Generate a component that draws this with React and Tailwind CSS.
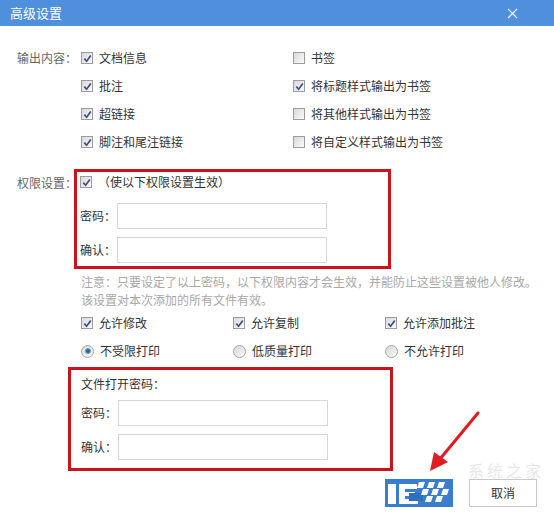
import React from "react";

const Check = ({ checked }) => (
  <span className="w-[12px] h-[12px] border border-[#9c9c9c] bg-linear-to-br from-[#d8d8d8] to-[#fbfbfb] flex items-center justify-center shrink-0">
    {checked && (
      <svg width="9" height="9" viewBox="0 0 9 9">
        <path d="M1.3 4.6 L3.6 7.2 L7.8 1.4" stroke="#3e4f8a" strokeWidth="1.7" fill="none" />
      </svg>
    )}
  </span>
);

const Radio = ({ checked }) => (
  <span className="w-[13px] h-[13px] rounded-full border border-[#a8a8a8] bg-linear-to-br from-[#d6d6d6] to-[#fafafa] flex items-center justify-center shrink-0">
    {checked && <span className="w-[6px] h-[6px] rounded-full bg-[#1f6a99] border border-[#6fa3c4]" />}
  </span>
);

const CItem = ({ checked, children }) => (
  <div className="flex items-center gap-[6px] text-[#333] whitespace-nowrap">
    <Check checked={checked} />
    <span>{children}</span>
  </div>
);

const RItem = ({ checked, children }) => (
  <div className="flex items-center gap-[6px] text-[#333] whitespace-nowrap">
    <Radio checked={checked} />
    <span>{children}</span>
  </div>
);

const Field = ({ label }) => (
  <div className="flex items-center">
    <span className="w-[37px] text-[#333] whitespace-nowrap">{label}</span>
    <div className="w-[210px] h-[26px] border border-[#d6d6d6] bg-white" />
  </div>
);

export default function App() {
  return (
    <div
      className="relative w-[554px] h-[516px] bg-white overflow-hidden text-[12px] leading-[18px]"
      style={{ fontFamily: '"Noto Sans CJK SC", "Noto Sans", sans-serif' }}
    >
      {/* title bar */}
      <div className="h-[26px] bg-[#4f8fdc] flex items-center justify-between pl-[10px] pr-[36px] text-white text-[13px]">
        <span>高级设置</span>
        <svg width="11" height="11" viewBox="0 0 11 11">
          <path d="M1 1 L10 10 M10 1 L1 10" stroke="#ffffff" strokeWidth="1.2" />
        </svg>
      </div>

      {/* output content */}
      <div className="mt-[18px] flex pl-[17px]">
        <div className="w-[64px] h-[28px] flex items-center text-[#666] whitespace-nowrap">输出内容：</div>
        <div className="grid grid-cols-[212px_1fr]">
          <div className="h-[28px] flex items-center"><CItem checked>文档信息</CItem></div>
          <div className="h-[28px] flex items-center"><CItem>书签</CItem></div>
          <div className="h-[28px] flex items-center"><CItem checked>批注</CItem></div>
          <div className="h-[28px] flex items-center"><CItem checked>将标题样式输出为书签</CItem></div>
          <div className="h-[28px] flex items-center"><CItem checked>超链接</CItem></div>
          <div className="h-[28px] flex items-center"><CItem>将其他样式输出为书签</CItem></div>
          <div className="h-[28px] flex items-center"><CItem checked>脚注和尾注链接</CItem></div>
          <div className="h-[28px] flex items-center"><CItem>将自定义样式输出为书签</CItem></div>
        </div>
      </div>

      {/* permissions */}
      <div className="mt-[13px] flex pl-[17px]">
        <div className="w-[57px] pt-[5px] text-[#666] whitespace-nowrap">权限设置：</div>
        <div className="w-[317px] border-[3px] border-[#c8141c] pl-[3px] pb-[3px]">
          <div className="h-[20px] flex items-center">
            <CItem checked>（使以下权限设置生效）</CItem>
          </div>
          <div className="mt-[11px]"><Field label="密码：" /></div>
          <div className="mt-[8px]"><Field label="确认：" /></div>
        </div>
      </div>

      <div className="mt-[4px] pl-[81px] pr-[10px] text-[#a8a8a8]">
        <div>注意：只要设定了以上密码，以下权限内容才会生效，并能防止这些设置被他人修改。</div>
        <div>该设置对本次添加的所有文件有效。</div>
      </div>

      <div className="pl-[81px] grid grid-cols-[152px_152px_1fr]">
        <div className="h-[28px] flex items-center"><CItem checked>允许修改</CItem></div>
        <div className="h-[28px] flex items-center"><CItem checked>允许复制</CItem></div>
        <div className="h-[28px] flex items-center"><CItem checked>允许添加批注</CItem></div>
        <div className="h-[28px] flex items-center"><RItem checked>不受限打印</RItem></div>
        <div className="h-[28px] flex items-center"><RItem>低质量打印</RItem></div>
        <div className="h-[28px] flex items-center"><RItem>不允许打印</RItem></div>
      </div>

      {/* file open password */}
      <div className="mt-[2px] ml-[68px] w-[325px] border-[3px] border-[#c8141c] pl-[10px] pb-[8px]">
        <div className="h-[28px] flex items-center text-[#333]">文件打开密码：</div>
        <div className="mt-[2px]"><Field label="密码：" /></div>
        <div className="mt-[8px]"><Field label="确认：" /></div>
      </div>

      {/* buttons */}
      <div className="mt-[8px] flex justify-end gap-[16px] pr-[17px]">
        <div className="w-[68px] h-[28px] bg-[#3f7fd0] relative overflow-hidden">
          <svg width="68" height="30" viewBox="0 0 68 30" className="absolute left-0 top-[-1px]">
            <rect x="0" y="0" width="68" height="30" fill="#3a7dce" />
            <rect x="3" y="6" width="8" height="20" fill="#ffffff" />
            <path d="M14 6 H32 V11 H20 V14 H30 V18 H20 V21 H33 V26 H14 Z" fill="#ffffff" />
            <rect x="24" y="15" width="14" height="8" fill="#2f6fc0" />
            <path d="M34 4 L40 4 L38 10 L32 10 Z" fill="#ffffff" />
            <path d="M44 4 L50 4 L48 10 L42 10 Z" fill="#ffffff" />
            <path d="M38 11 L44 11 L42 17 L36 17 Z" fill="#ffffff" />
            <path d="M48 11 L54 11 L52 17 L46 17 Z" fill="#ffffff" />
            <path d="M54 4 L60 4 L58 10 L52 10 Z" fill="#ffffff" />
            <path d="M42 18 L48 18 L46 24 L40 24 Z" fill="#ffffff" />
            <path d="M58 11 L64 11 L62 17 L56 17 Z" fill="#ffffff" />
            <path d="M52 18 L58 18 L56 24 L50 24 Z" fill="#ffffff" />
          </svg>
        </div>
        <div className="w-[68px] h-[28px] border border-[#c8c8c8] bg-white flex items-center justify-center text-[#333]">
          <span className="leading-[12px]">取消</span>
        </div>
      </div>

      {/* watermark text */}
      <div className="absolute left-[468px] top-[463px] text-[16px] leading-[14px] text-[#e8e8e8] tracking-[3px] pointer-events-none">
        系统之家
      </div>

      {/* red arrow */}
      <svg className="absolute left-0 top-0 pointer-events-none" width="554" height="516" viewBox="0 0 554 516">
        <line x1="478" y1="413" x2="440" y2="459" stroke="#e31b23" strokeWidth="3" strokeLinecap="round" />
        <path d="M430 471 L434 452 L448 462 Z" fill="#e31b23" />
      </svg>
    </div>
  );
}
